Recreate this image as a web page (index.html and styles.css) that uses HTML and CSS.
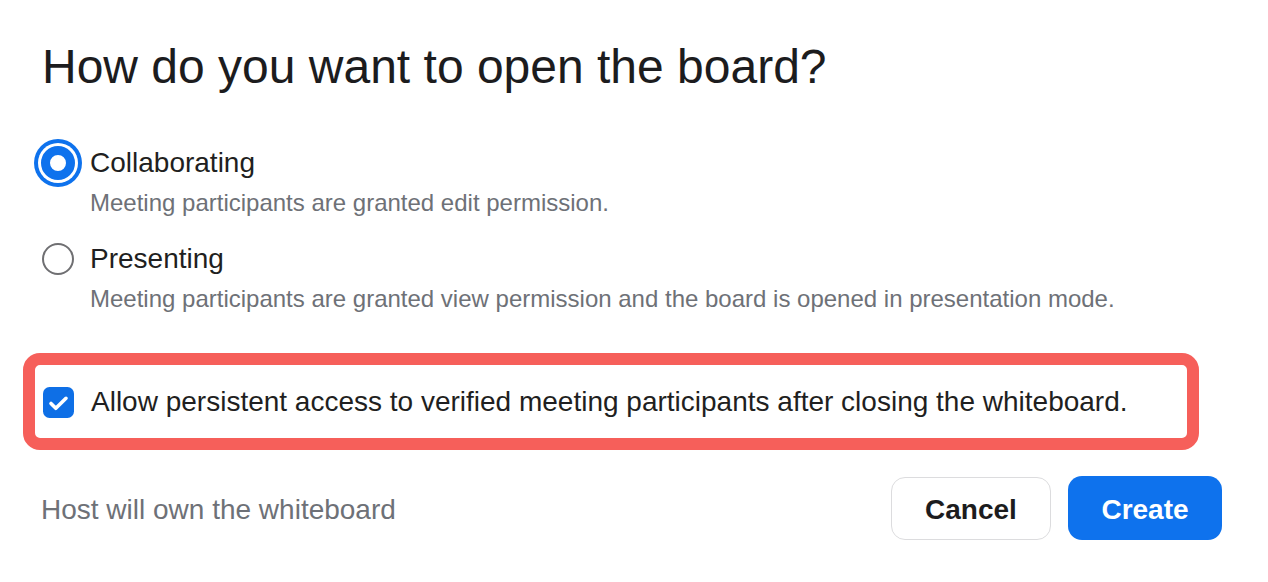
FILE: index.html
```html
<!DOCTYPE html>
<html lang="en">
<head>
<meta charset="utf-8">
<title>Open board</title>
<link rel="stylesheet" href="styles.css">
</head>
<body>
<main class="dialog">
  <h1 class="title">How do you want to open the board?</h1>

  <div class="options">
    <div class="option">
      <span class="radio checked"></span>
      <div class="label">Collaborating</div>
      <div class="desc">Meeting participants are granted edit permission.</div>
    </div>
    <div class="option">
      <span class="radio"></span>
      <div class="label">Presenting</div>
      <div class="desc">Meeting participants are granted view permission and the board is opened in presentation mode.</div>
    </div>
  </div>

  <div class="highlight">
    <div class="check-row">
      <svg class="checkbox" width="31" height="31" viewBox="0 0 31 31" aria-hidden="true">
        <rect x="0" y="0" width="31" height="31" rx="6.5" fill="#0e6fe6"/>
        <path d="M8 16.5 L12.8 21.3 L23 11.3" fill="none" stroke="#fff" stroke-width="3.6" stroke-linecap="round" stroke-linejoin="round"/>
      </svg>
      <div class="label">Allow persistent access to verified meeting participants after closing the whiteboard.</div>
    </div>
  </div>

  <div class="footer">
    <div class="owner">Host will own the whiteboard</div>
    <div class="buttons">
      <button class="btn btn-cancel" type="button">Cancel</button>
      <button class="btn btn-create" type="button">Create</button>
    </div>
  </div>
</main>
</body>
</html>
```

FILE: styles.css
```css
* { box-sizing: border-box; }

html, body {
  margin: 0;
  padding: 0;
  background: #ffffff;
}

body {
  font-family: "Liberation Sans", Arial, Helvetica, sans-serif;
  color: #1f1f21;
}

.dialog {
  padding: 39px 46px 0 40px;
}

.title {
  margin: 0 0 0 2px;
  font-size: 48px;
  line-height: 56px;
  font-weight: 400;
  color: #1c1c1e;
}

.options {
  margin-top: 48px;
  display: flex;
  flex-direction: column;
  gap: 19px;
}

.option {
  display: grid;
  grid-template-columns: 36px 1fr;
  column-gap: 14px;
  row-gap: 3px;
}

.option .radio {
  grid-column: 1;
  grid-row: 1;
  justify-self: center;
  align-self: center;
}

.option .label {
  grid-column: 2;
  grid-row: 1;
}

.option .desc {
  grid-column: 2;
  grid-row: 2;
}

.label {
  font-size: 28px;
  line-height: 40px;
  color: #1f1f21;
}

.desc {
  font-size: 24px;
  line-height: 34px;
  color: #6e7177;
}

.radio {
  display: block;
  width: 32px;
  height: 32px;
  border-radius: 50%;
  border: 2px solid #6f6f72;
  background: #fff;
}

.radio.checked {
  width: 34px;
  height: 34px;
  border: 9px solid #0e72ed;
  box-shadow: 0 0 0 3px #ffffff, 0 0 0 7px #0e72ed;
}

.highlight {
  margin: 37px 23px 0 -17px;
  border: 12px solid #f65f5a;
  border-radius: 17px;
  padding: 17px 0 16px 6px;
}

.check-row {
  display: grid;
  grid-template-columns: 36px 1fr;
  column-gap: 14px;
  align-items: center;
}

.checkbox {
  display: block;
  justify-self: center;
  margin-left: -1px;
}

.footer {
  margin-top: 26px;
  display: flex;
  align-items: center;
  justify-content: space-between;
}

.owner {
  font-size: 28px;
  line-height: 40px;
  color: #6e7177;
  margin-left: 1px;
  padding-top: 3px;
}

.buttons {
  display: flex;
  gap: 17px;
  align-items: center;
}

.btn {
  font-family: "Liberation Sans", Arial, Helvetica, sans-serif;
  font-size: 28px;
  font-weight: 700;
  height: 63px;
  border-radius: 14px;
  padding: 3px 33px 0;
  cursor: pointer;
}

.btn-cancel {
  background: #ffffff;
  color: #1c1c1e;
  border: 1.5px solid #dcdcde;
  width: 160px;
}

.btn-create {
  background: #0e72ed;
  color: #ffffff;
  border: none;
  width: 154px;
  height: 64px;
}
```
